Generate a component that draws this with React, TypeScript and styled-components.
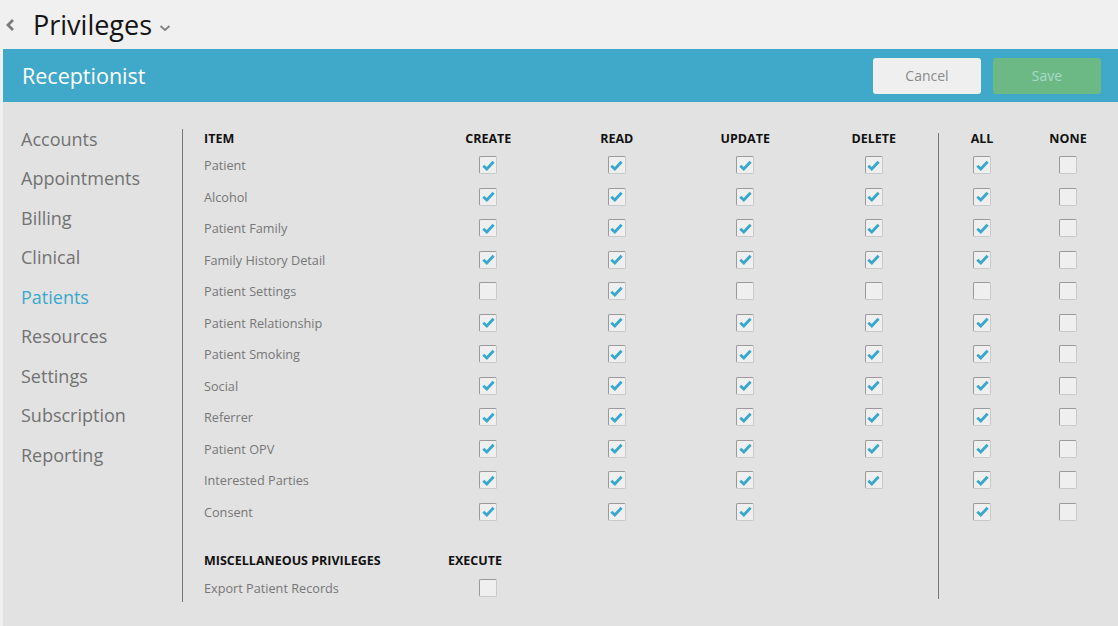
import styled, { createGlobalStyle } from "styled-components";

const GlobalStyle = createGlobalStyle`
  html, body {
    margin: 0;
    padding: 0;
    background: #f0f0f0;
    font-family: "Open Sans", "Liberation Sans", sans-serif;
  }
  * { box-sizing: border-box; }
`;

const Page = styled.div`
  display: flex;
  flex-direction: column;
  height: 626px;
  overflow: hidden;
`;

const TopBar = styled.div`
  flex-shrink: 0;
  height: 49px;
  display: flex;
  align-items: center;
  padding-left: 5px;
  gap: 17px;
`;

const Title = styled.h1`
  margin: 0;
  font-size: 27px;
  font-weight: 400;
  color: #141414;
  display: flex;
  align-items: center;
  gap: 7px;
  line-height: 1;
`;

const Panel = styled.div`
  margin-left: 3px;
  flex: 1;
  display: flex;
  flex-direction: column;
  background: #e2e2e2;
`;

const RoleHeader = styled.div`
  flex-shrink: 0;
  height: 53px;
  background: #40a9c9;
  display: flex;
  align-items: center;
  justify-content: space-between;
  padding: 0 17px 0 19px;
`;

const RoleName = styled.div`
  color: #fff;
  font-size: 21.5px;
`;

const Actions = styled.div`
  display: flex;
  gap: 12px;
`;

const ActionButton = styled.button<{ $primary?: boolean }>`
  width: 108px;
  height: 36px;
  border: none;
  border-radius: 3px;
  font-family: inherit;
  font-size: 14px;
  background: ${(p) => (p.$primary ? "#6cb986" : "#efefef")};
  color: ${(p) => (p.$primary ? "#a9d9c7" : "#8a8a8a")};
`;

const Body = styled.div`
  flex: 1;
  display: flex;
`;

const Sidebar = styled.nav`
  width: 179px;
  padding: 17px 0 0 18px;
  display: flex;
  flex-direction: column;
`;

const NavItem = styled.div<{ $active?: boolean }>`
  height: 39.5px;
  display: flex;
  align-items: center;
  font-size: 18px;
  color: ${(p) => (p.$active ? "#3ba8cc" : "#727272")};
`;

const VLine = styled.div<{ $top: number; $bottom: number }>`
  width: 1px;
  background: #777;
  margin-top: ${(p) => p.$top}px;
  margin-bottom: ${(p) => p.$bottom}px;
`;

const TableArea = styled.div`
  display: flex;
  align-items: stretch;
  padding: 25px 0 22px 21px;
`;

const Grid = styled.div<{ $cols: string }>`
  display: grid;
  grid-template-columns: ${(p) => p.$cols};
  grid-template-rows: 22.5px;
  grid-auto-rows: 31.5px;
  align-items: center;
  align-content: start;
`;

const MiscGrid = styled(Grid)`
  margin-top: 22px;
`;

const HeadCell = styled.div<{ $align?: "left" | "center"; $shift?: number }>`
  font-size: 12.5px;
  font-weight: 700;
  color: #111;
  white-space: nowrap;
  text-align: ${(p) => p.$align ?? "center"};
  margin-left: ${(p) => p.$shift ?? 0}px;
`;

const ItemCell = styled.div`
  font-size: 12.7px;
  color: #777;
  white-space: nowrap;
`;

const BoxCell = styled.div`
  display: flex;
  justify-content: center;
`;

const LeftSide = styled.div`
  display: flex;
  flex-direction: column;
`;

const Box = styled.span`
  width: 18px;
  height: 18px;
  border-radius: 2px;
  background: #efefef;
  border: 1px solid #c9c9c9;
  border-top-color: #9a9a9a;
  border-left-color: #9a9a9a;
  display: flex;
  align-items: center;
  justify-content: center;
`;

function Check({ on }: { on?: boolean }) {
  return (
    <Box>
      {on && (
        <svg width="15" height="15" viewBox="0 0 15 15">
          <path d="M2.3 7.8 L5.8 11 L12.6 3.8" fill="none" stroke="#3aa8cc" strokeWidth="2.9" />
        </svg>
      )}
    </Box>
  );
}

const sections = ["Accounts", "Appointments", "Billing", "Clinical", "Patients", "Resources", "Settings", "Subscription", "Reporting"];

type Row = { name: string; c: (boolean | null)[]; all: boolean };

const rows: Row[] = [
  { name: "Patient", c: [true, true, true, true], all: true },
  { name: "Alcohol", c: [true, true, true, true], all: true },
  { name: "Patient Family", c: [true, true, true, true], all: true },
  { name: "Family History Detail", c: [true, true, true, true], all: true },
  { name: "Patient Settings", c: [false, true, false, false], all: false },
  { name: "Patient Relationship", c: [true, true, true, true], all: true },
  { name: "Patient Smoking", c: [true, true, true, true], all: true },
  { name: "Social", c: [true, true, true, true], all: true },
  { name: "Referrer", c: [true, true, true, true], all: true },
  { name: "Patient OPV", c: [true, true, true, true], all: true },
  { name: "Interested Parties", c: [true, true, true, true], all: true },
  { name: "Consent", c: [true, true, true, null], all: true },
];

const leftCols = "220px repeat(4, 128.5px)";

export default function App() {
  return (
    <Page>
      <GlobalStyle />
      <TopBar>
        <svg width="11" height="16" viewBox="0 0 11 16">
          <path d="M8 3 L3 8 L8 13" fill="none" stroke="#7a7a7a" strokeWidth="2.8" />
        </svg>
        <Title>
          Privileges
          <svg width="12" height="10" viewBox="0 0 12 10" style={{ marginTop: 6 }}>
            <path d="M1.5 3 L6 7 L10.5 3" fill="none" stroke="#808080" strokeWidth="1.8" />
          </svg>
        </Title>
      </TopBar>
      <Panel>
        <RoleHeader>
          <RoleName>Receptionist</RoleName>
          <Actions>
            <ActionButton>Cancel</ActionButton>
            <ActionButton $primary>Save</ActionButton>
          </Actions>
        </RoleHeader>
        <Body>
          <Sidebar>
            {sections.map((s) => (
              <NavItem key={s} $active={s === "Patients"}>
                {s}
              </NavItem>
            ))}
          </Sidebar>
          <VLine $top={27} $bottom={24} />
          <TableArea>
            <LeftSide>
              <Grid $cols={leftCols}>
                <HeadCell $align="left">ITEM</HeadCell>
                <HeadCell>CREATE</HeadCell>
                <HeadCell>READ</HeadCell>
                <HeadCell>UPDATE</HeadCell>
                <HeadCell>DELETE</HeadCell>
                {rows.map((r) => [
                  <ItemCell key={r.name}>{r.name}</ItemCell>,
                  ...r.c.map((v, i) => (
                    <BoxCell key={r.name + i}>{v !== null && <Check on={v} />}</BoxCell>
                  )),
                ])}
              </Grid>
              <MiscGrid $cols={leftCols}>
                <HeadCell $align="left">MISCELLANEOUS PRIVILEGES</HeadCell>
                <HeadCell $align="left" $shift={24}>EXECUTE</HeadCell>
                <div />
                <div />
                <div />
                <ItemCell>Export Patient Records</ItemCell>
                <BoxCell>
                  <Check />
                </BoxCell>
              </MiscGrid>
            </LeftSide>
            <VLine $top={6} $bottom={5} />
            <Grid $cols="repeat(2, 86px)">
              <HeadCell>ALL</HeadCell>
              <HeadCell>NONE</HeadCell>
              {rows.map((r) => [
                <BoxCell key={r.name + "a"}>
                  <Check on={r.all} />
                </BoxCell>,
                <BoxCell key={r.name + "n"}>
                  <Check />
                </BoxCell>,
              ])}
            </Grid>
          </TableArea>
        </Body>
      </Panel>
    </Page>
  );
}
